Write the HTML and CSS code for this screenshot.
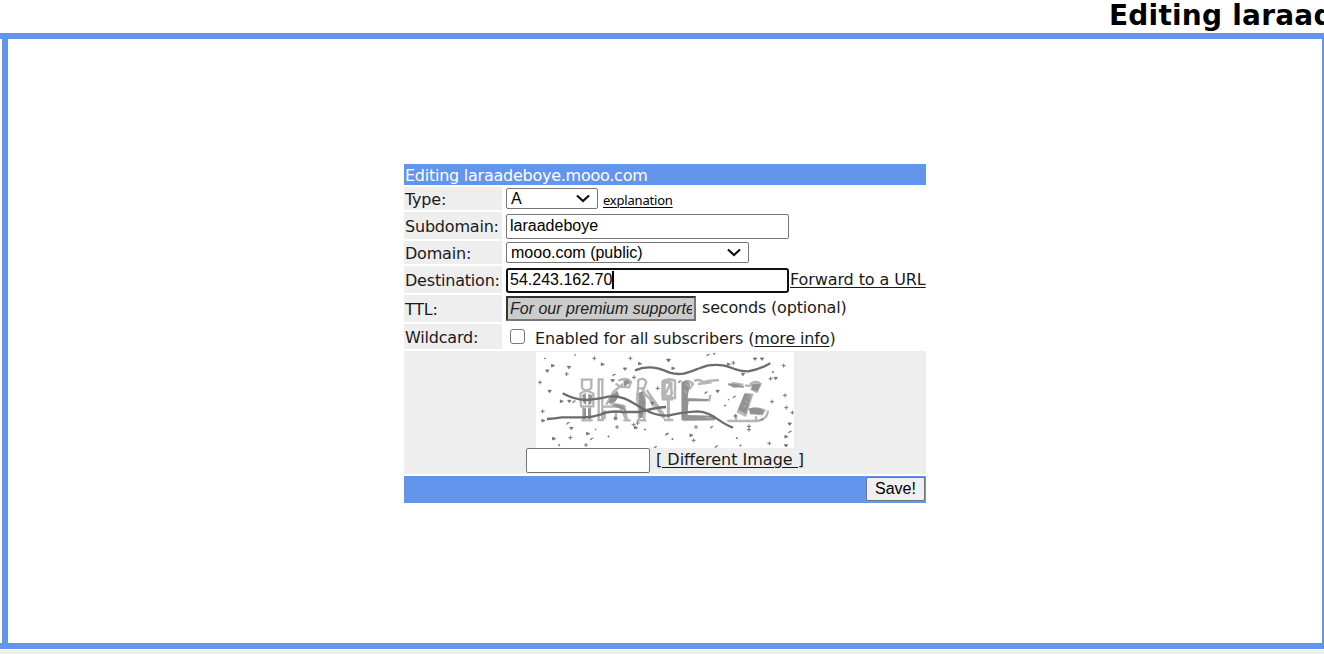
FILE: index.html
```html
<!DOCTYPE html>
<html lang="en">
<head>
<meta charset="utf-8">
<title>Editing laraadeboye.mooo.com</title>
<link rel="stylesheet" href="styles.css">
</head>
<body>
<header class="banner"><h1>Editing laraadeboye.mooo.com</h1></header>
<main class="frame">
  <form class="editor">
    <div class="bar title"><span>Editing laraadeboye.mooo.com</span></div>
    <div class="label"><span>Type:</span></div>
    <div class="field">
      <div class="select type"><span>A</span><svg width="14" height="9" viewBox="0 0 14 9"><path d="M1 1.5l6 5.5L13 1.5"/></svg></div>
      <a class="small">explanation</a>
    </div>
    <div class="label"><span>Subdomain:</span></div>
    <div class="field"><div class="input wide">laraadeboye</div></div>
    <div class="label"><span>Domain:</span></div>
    <div class="field"><div class="select domain"><span>mooo.com (public)</span><svg width="14" height="9" viewBox="0 0 14 9"><path d="M1 1.5l6 5.5L13 1.5"/></svg></div></div>
    <div class="label"><span>Destination:</span></div>
    <div class="field"><div class="input wide focus">54.243.162.70<i class="caret"></i></div><a class="forward">Forward to a URL</a></div>
    <div class="label"><span>TTL:</span></div>
    <div class="field"><div class="input disabled"><div class="value">For our premium supporters</div></div><span class="seconds">seconds (optional)</span></div>
    <div class="label"><span>Wildcard:</span></div>
    <div class="field"><i class="check"></i><span class="enabled">Enabled for all subscribers (<a>more info</a>)</span></div>
    <div class="captcha">
      <svg class="puzzle" width="258" height="96" viewBox="0 0 258 96">
        <defs>
          <path id="p" d="M-6 0H6M0-6V6"/>
          <path id="v" d="M-5-3H5L0 4Z"/>
          <path id="r" d="M-4-5V5M-3-3L5 0L-3 3Z"/>
          <path id="d" d="M-5 2H-1V-2H5"/>
        </defs>
        <g transform="translate(-6 -4) scale(.33333)">
          <g class="soft">
            <path d="M152 95h36M156 98v22q14 14 28 0V98M151 137q17-15 39 0v38h-37zM160 178v38M180 178v38M154 217h34"/>
            <path d="M206 94v122M217 94v122M203 94h18M202 216h20M220 176h50l18 38M229 170l21-38 30-25M265 98q24-12 38 4l-6 16-28-2-12-10M240 166l43 8 8 41M224 187v27M258 190v27M280 217h22"/>
            <path d="M325 96q17-9 24 6l-7 19h-18zM324 122q-6 30 3 60v35M337 120q12 20 5 97M340 132l28 30 35 50M350 126l52 75M320 217h29M399 97l21-2M398 102v46M404 99h16M414 150v55M370 175l-14-30"/>
          </g>
          <g class="fill"><path d="M157 140l10-5 2 35-9-5zM175 137l11 5-2 25-9 4zM160 181h8v32h-8zM174 181h8v32h-8zM280 98l14-3 6 9-17 12zM244 143l18-15 6 16-15 20-18 1zM260 167l20 6 8 18-12-8-30-9zM325 135l13-6 8 35-9 46h-9z"/></g>
        </g>
        <g transform="translate(124 -4) scale(.33333)">
          <g class="soft">
            <path d="M8 100q18-10 37-2v52H8zM14 104h20v40H14zM17 138l13-30 7 31M26 151v64M12 216h28M5 154h34"/>
            <path d="M68 104q18-12 31 4l-10 14-19-6zM67 102v114M80 120v91M82 154l66 3 3-16M68 210h98M68 216l94-2M102 99q17-7 28 3 19-6 47-5M114 108l41-5"/>
            <path d="M204 109l48 8M216 105l34 6M255 113h24M270 108q20-12 32 0l-12 23-18-9M257 138l-23 54 22 10 20-62zM202 219h88q32-3 34-31M267 185q24-8 46 2l-7 12-37-4M228 199v18M288 205v13"/>
          </g>
          <g class="fill"><path d="M66 104q14-11 24 4l-8 43 64 2-6 7H86l-5 41 86 2-2 13H66zM203 107q25-3 48 9l-30 3zM276 110q13-7 25 0l-8 20-18-5zM253 137l20 4-15 58-24-12zM265 183q30-9 48 5l-6 11-35-2z"/></g>
          <g class="detail"><path d="M75 106l13 9M74 128l6 10M260 147l7 3M255 159l7 4M250 172l7 4M138 208l14 3"/></g>
        </g>
        <g transform="translate(-6 -4) scale(.33333)">
          <g class="line">
            <path d="M98 136Q132 155 167 156Q210 153 235 146C285 139 312 170 348 187Q379 204 414 203Q445 194 503 190C544 190 570 226 609 239"/>
            <path d="M51 213Q75 212 95 208H162Q187 208 211 200Q236 187 282 192H330Q374 178 408 177"/>
            <path d="M315 67Q360 46 419 74C467 88 490 63 535 52C600 44 607 71 654 70Q686 66 721 46"/>
          </g>
          <g class="specks">
            <use href="#r" x="69" y="53"/><use href="#v" x="52" y="69"/><use href="#v" x="117" y="58"/><use href="#p" x="110" y="78"/><use href="#p" x="193" y="31"/><use href="#r" x="218" y="49"/><use href="#v" x="285" y="63"/><use href="#p" x="301" y="31"/><use href="#r" x="330" y="47"/><use href="#d" x="252" y="81"/><use href="#v" x="248" y="98"/><use href="#p" x="30" y="103"/><use href="#v" x="59" y="130"/><use href="#r" x="95" y="160"/><use href="#v" x="118" y="160"/><use href="#d" x="132" y="161"/><use href="#p" x="38" y="190"/><use href="#r" x="40" y="218"/><use href="#d" x="114" y="226"/><use href="#v" x="124" y="241"/><use href="#r" x="72" y="272"/><use href="#p" x="121" y="269"/><use href="#r" x="174" y="257"/><use href="#d" x="185" y="273"/><use href="#p" x="168" y="291"/><use href="#p" x="261" y="237"/><use href="#r" x="257" y="211"/><use href="#p" x="311" y="230"/><use href="#p" x="323" y="225"/><use href="#r" x="318" y="239"/><use href="#p" x="312" y="88"/><use href="#p" x="383" y="121"/><use href="#v" x="367" y="166"/><use href="#v" x="415" y="37"/><use href="#d" x="376" y="298"/><use href="#d" x="411" y="259"/>
            <path d="M44 30h2v2h-2zM134 20h2v2h-2zM86 290h3v3h-3zM234 264h3v3h-3zM343 243h3v3h-3zM196 243h2v2h-2z"/>
          </g>
        </g>
        <g class="specks" transform="translate(124 -4) scale(.33333)">
          <use href="#d" x="144" y="21"/><use href="#v" x="26" y="37"/><use href="#r" x="40" y="61"/><use href="#r" x="206" y="49"/><use href="#p" x="220" y="45"/><use href="#v" x="285" y="33"/><use href="#v" x="306" y="33"/><use href="#p" x="371" y="53"/><use href="#v" x="249" y="79"/><use href="#p" x="332" y="92"/><use href="#v" x="347" y="91"/><use href="#d" x="59" y="101"/><use href="#d" x="138" y="134"/><use href="#v" x="173" y="130"/><use href="#d" x="223" y="147"/><use href="#p" x="336" y="161"/><use href="#p" x="375" y="142"/><use href="#p" x="379" y="179"/><use href="#p" x="397" y="194"/><use href="#v" x="389" y="228"/><use href="#d" x="390" y="252"/><use href="#r" x="379" y="266"/><use href="#v" x="378" y="293"/><use href="#p" x="328" y="286"/><use href="#p" x="267" y="235"/><use href="#p" x="267" y="245"/><use href="#p" x="108" y="237"/><use href="#d" x="155" y="238"/><use href="#r" x="94" y="262"/><use href="#p" x="101" y="277"/><use href="#d" x="21" y="258"/><use href="#d" x="169" y="296"/><use href="#p" x="226" y="204"/>
          <path d="M161 16h3v3h-3zM205 154h2v2h-2zM194 171h3v3h-3zM229 269h3v3h-3zM240 291h3v3h-3zM304 213h3v3h-3zM36 272h3v3h-3zM337 71h3v3h-3z"/>
        </g>
      </svg>
      <div class="answer"><div class="input short"></div><a class="different">[ Different Image ]</a></div>
    </div>
    <div class="bar footer"><button type="button">Save!</button></div>
  </form>
</main>
<div class="bottom"></div>
</body>
</html>
```
FILE: styles.css
```css
* { box-sizing: border-box; }
body { margin: 0; width: 1324px; height: 654px; overflow: hidden; background: #fff; color: #1a1a1a; font: 16px/20px "DejaVu Sans", Verdana, sans-serif; }
.banner { height: 33px; padding-left: 1109px; overflow: hidden; white-space: nowrap; }
h1 { margin: 0; font-size: 28px; line-height: 32px; letter-spacing: .22px; color: #000; }
.frame { height: 616px; border-top: 6px solid #6495ed; border-bottom: 6px solid #6495ed; padding: 125px 0 0 396px; background: linear-gradient(#6495ed, #6495ed) 2px 0 / 6px 100% no-repeat, linear-gradient(#6495ed, #6495ed) 1322px 0 / 2px 100% no-repeat; }
.editor { margin-left: 8px; width: 522px; display: grid; grid-template-columns: 98px 422px; grid-template-rows: 21px 23px 27px 23px 27px 27px 25px 123px 27px; gap: 2px; white-space: nowrap; }
.bar { grid-column: 1 / -1; background: #6495ed; display: flex; align-items: center; }
.title { color: #fff; padding: 2px 0 0 1px; letter-spacing: -.25px; }
.label { background: #eee; padding: 2px 0 0 1px; display: flex; align-items: center; letter-spacing: -.2px; }
.field { padding-left: 2px; display: flex; align-items: center; }
a { text-decoration: underline; text-underline-offset: 2px; text-decoration-thickness: 1px; }
.input, .select { background: #fff; border: 1px solid #767676; border-radius: 2px; font: 16px/20px "Liberation Sans", Arial, sans-serif; color: #000; overflow: hidden; }
.input { height: 25px; padding: 1px 3px; }
.wide { width: 283px; flex: none; margin-top: 2px; }
.focus { border: 2px solid #101010; border-radius: 3px; padding: 0 2px; display: flex; }
.caret { width: 2px; height: 18px; margin-top: 1px; background: #000; }
.disabled { width: 190px; border: 2px solid #767676; border-top-color: #333; border-left-color: #333; border-radius: 0; background: #ccc; color: #222; font-style: italic; padding: 1px 2px 0; }
.value { overflow: hidden; }
.select { height: 21px; display: flex; align-items: center; justify-content: space-between; padding: 0 7px 0 4px; }
.select svg { fill: none; stroke: #111; stroke-width: 2.2; }
.type { width: 92px; }
.domain { width: 243px; }
.small { margin: 2px 0 0 5px; font: 13px/16px "Noto Sans", sans-serif; letter-spacing: -.2px; color: #000; }
.check { width: 15px; height: 15px; margin: 0 10px 0 4px; border: 1px solid #767676; border-radius: 3px; background: #fff; }
.forward { letter-spacing: -.1px; padding-left: 1px; }
.seconds { margin: -1px 0 0 6px; letter-spacing: -.18px; }
.enabled { margin-top: 4px; letter-spacing: -.15px; }
.captcha { grid-column: 1 / -1; background: #eee; display: flex; flex-direction: column; align-items: center; padding-top: 1px; }
.puzzle { display: block; background: #fff; }
.soft { fill: none; stroke: #b5b5b5; stroke-width: 7; }
.fill { fill: #929292; }
.detail { fill: none; stroke: #bbb; stroke-width: 3; }
.line { fill: none; stroke: #6c6c6c; stroke-width: 7; stroke-linejoin: round; }
.specks { fill: #777; stroke: #777; stroke-width: 3; }
.answer { display: flex; align-items: center; gap: 6px; }
.short { width: 124px; }
.different { margin-top: -2px; }
.footer { justify-content: flex-end; padding: 0 1px 1px 0; }
button { width: 59px; height: 24px; padding: 0; background: #efefef; border: 1px solid #767676; border-radius: 2px; font: 16px/20px "Liberation Sans", Arial, sans-serif; color: #000; }
.bottom { height: 5px; border-top: 1px solid #fff; background: #eee; }
```
